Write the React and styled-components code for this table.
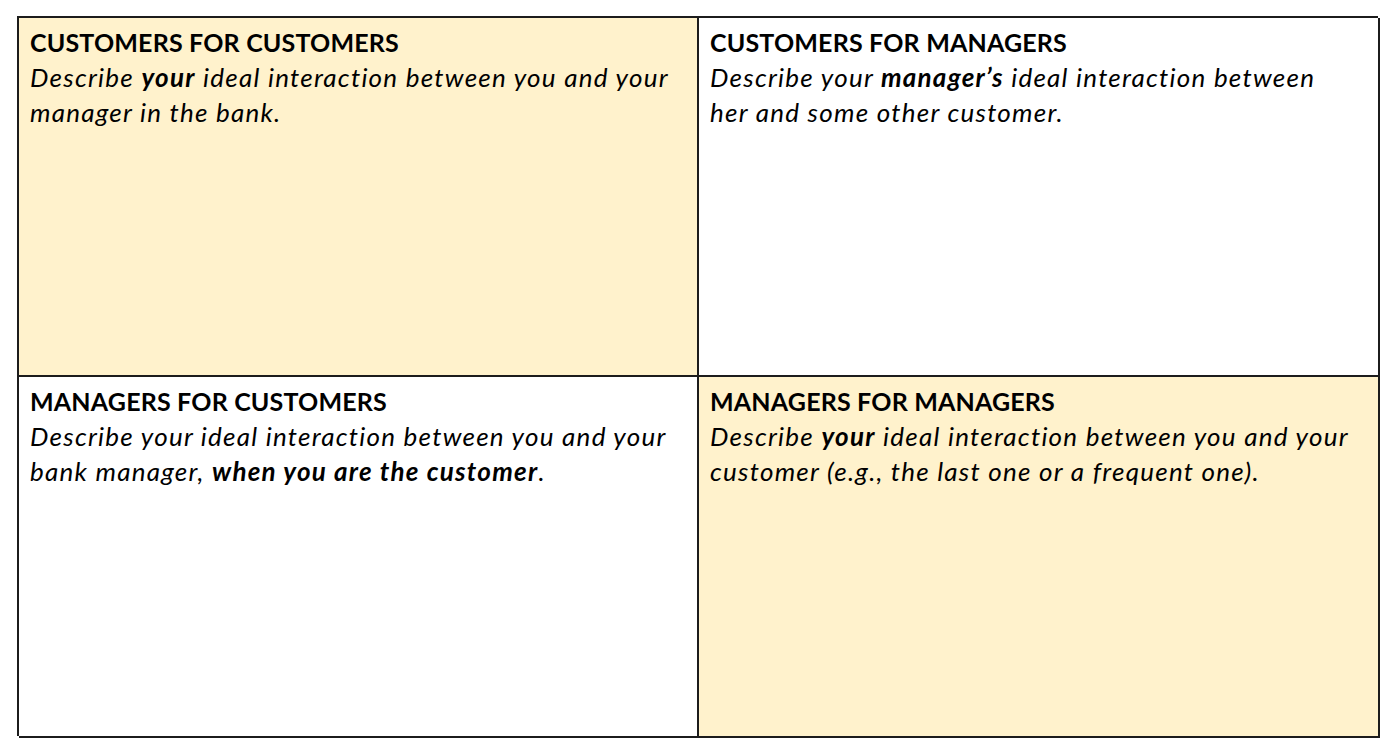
import React from "react";
import styled, { createGlobalStyle } from "styled-components";

const Global = createGlobalStyle`
  html, body { margin: 0; padding: 0; background: #fff; }
  body { font-family: Lato, "Open Sans", sans-serif; color: #000; }
`;

const Page = styled.div`
  width: 1400px;
  height: 755px;
  padding: 16px 0 0 17px;
  box-sizing: border-box;
`;

const Grid = styled.div`
  display: grid;
  grid-template-columns: 680px 681px;
  grid-template-rows: 359px 361px;
  border-top: 2px solid #1c1c1c;
  border-left: 2px solid #1c1c1c;
  width: 1361px;
  height: 720px;
  box-sizing: border-box;
`;

const Cell = styled.div`
  background: ${(p) => (p.$shaded ? "#FFF2CC" : "#fff")};
  border-right: 2px solid #1c1c1c;
  border-bottom: 2px solid #1c1c1c;
  padding: 7px 19px 0 11px;
  box-sizing: border-box;
  line-height: 35px;
`;

const Title = styled.div`
  font-size: 25px;
  font-weight: 700;
  letter-spacing: 0.18px;
`;

const Desc = styled.div`
  font-size: 26px;
  font-style: italic;
  letter-spacing: 1.25px;
  b { font-weight: 700; }
`;

export default function App() {
  return (
    <Page>
      <Global />
      <Grid>
        <Cell $shaded>
          <Title>CUSTOMERS FOR CUSTOMERS</Title>
          <Desc>
            Describe <b>your</b> ideal interaction between you and your manager in the bank.
          </Desc>
        </Cell>
        <Cell>
          <Title>CUSTOMERS FOR MANAGERS</Title>
          <Desc>
            Describe your <b>manager’s</b> ideal interaction between her and some other customer.
          </Desc>
        </Cell>
        <Cell>
          <Title>MANAGERS FOR CUSTOMERS</Title>
          <Desc>
            Describe your ideal interaction between you and your bank manager, <b>when you are the customer</b>.
          </Desc>
        </Cell>
        <Cell $shaded>
          <Title>MANAGERS FOR MANAGERS</Title>
          <Desc>
            Describe <b>your</b> ideal interaction between you and your customer (e.g., the last one or a frequent one).
          </Desc>
        </Cell>
      </Grid>
    </Page>
  );
}
